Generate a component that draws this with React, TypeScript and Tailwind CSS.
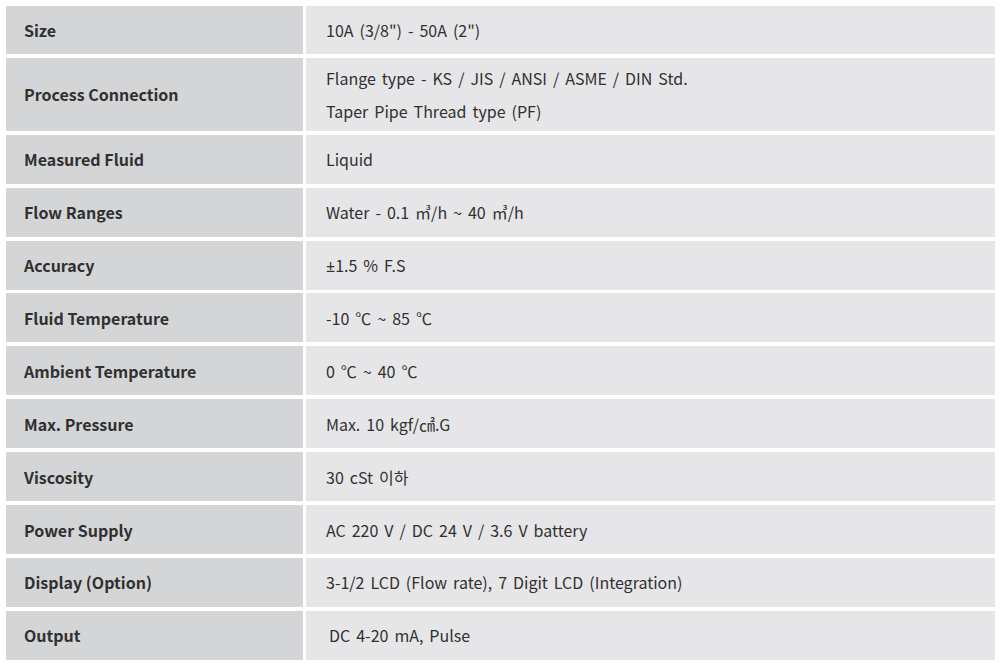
import React from "react";

const PM = () => <span style={{ fontFamily: '"Noto Sans", sans-serif' }}>±</span>;

const rows: { label: string; values: React.ReactNode[]; tall?: boolean; indent?: boolean }[] = [
  { label: "Size", values: ['10A (3/8") - 50A (2")'] },
  {
    label: "Process Connection",
    values: ["Flange type - KS / JIS / ANSI / ASME / DIN Std.", "Taper Pipe Thread type (PF)"],
    tall: true,
  },
  { label: "Measured Fluid", values: ["Liquid"] },
  { label: "Flow Ranges", values: ["Water - 0.1 ㎥/h ~ 40 ㎥/h"] },
  { label: "Accuracy", values: [<><PM />1.5 % F.S</>] },
  { label: "Fluid Temperature", values: ["-10 ℃ ~ 85 ℃"] },
  { label: "Ambient Temperature", values: ["0 ℃ ~ 40 ℃"] },
  { label: "Max. Pressure", values: ["Max. 10 kgf/㎠.G"] },
  { label: "Viscosity", values: ["30 cSt 이하"] },
  { label: "Power Supply", values: ["AC 220 V / DC 24 V / 3.6 V battery"] },
  { label: "Display (Option)", values: ["3-1/2 LCD (Flow rate), 7 Digit LCD (Integration)"] },
  { label: "Output", values: ["DC 4-20 mA, Pulse"], indent: true },
];

export default function App() {
  return (
    <div
      className="w-[1002px] h-[663px] bg-white pt-[6px] pl-[6px] text-[#303030]"
      style={{ fontFamily: '"Noto Sans CJK KR", "Noto Sans", sans-serif' }}
    >
      <div className="w-[989px] flex flex-col gap-[3.9px]">
        {rows.map((r, i) => (
          <div
            key={r.label}
            className={`flex gap-[3px] ${r.tall ? "h-[73px]" : i === 0 ? "h-[48px]" : "h-[49px]"}`}
          >
            <div className="w-[297px] bg-[#d4d5d7] flex items-center pl-[18px] text-[16px] font-bold">
              {r.label}
            </div>
            <div
              className={`flex-1 bg-[#e6e6e8] flex flex-col justify-center ${r.indent ? "pl-[23px]" : "pl-[20px]"} text-[16px] gap-[9px] [word-spacing:2.4px]`}
            >
              {r.values.map((v, j) => (
                <div key={j} className="leading-[24px]">{v}</div>
              ))}
            </div>
          </div>
        ))}
      </div>
    </div>
  );
}
